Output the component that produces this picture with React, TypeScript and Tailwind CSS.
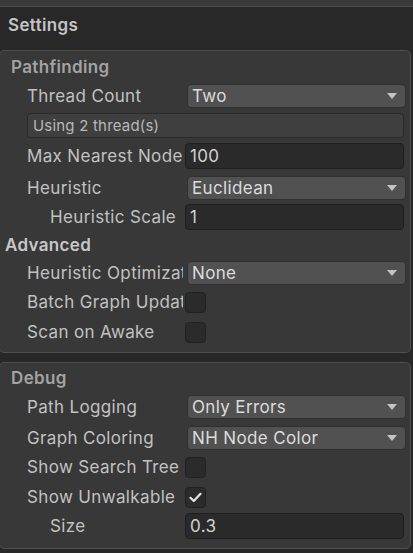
import React from "react";

function Arrow() {
    return (
        <svg width="10" height="7" viewBox="0 0 10 7" className="shrink-0">
            <path d="M0 0 L10 0 L5 6 Z" fill="#c4c4c4" />
        </svg>
    );
}

function Label({ text, indent = false }: { text: string; indent?: boolean }) {
    return (
        <div
            className={`${indent ? "pl-[50px]" : "pl-[27px]"} mr-[2px] w-[183px] shrink-0 overflow-hidden whitespace-nowrap text-[17px] tracking-[0.35px] text-[#c2c2c2]`}
        >
            {text}
        </div>
    );
}

function DropdownRow({ label, value }: { label: string; value: string }) {
    return (
        <div className="flex h-[24px] items-center">
            <Label text={label} />
            <div className="ml-[2px] mr-[4px] flex h-[24px] flex-1 items-center justify-between rounded-[4px] border border-[#303030] bg-[#515151] pl-[4px] pr-[8px] text-[17px] tracking-[0.35px] text-[#dcdcdc]">
                <span>{value}</span>
                <Arrow />
            </div>
        </div>
    );
}

function InputRow({ label, value, indent = false }: { label: string; value: string; indent?: boolean }) {
    return (
        <div className="flex h-[26px] items-center">
            <Label text={label} indent={indent} />
            <div className="mr-[6px] flex h-[26px] flex-1 items-center rounded-[4px] border border-[#1e1e1e] bg-[#2a2a2a] pl-[4px] text-[17px] tracking-[0.35px] text-[#d2d2d2]">
                {value}
            </div>
        </div>
    );
}

function CheckRow({ label, checked = false }: { label: string; checked?: boolean }) {
    return (
        <div className="flex h-[22px] items-center">
            <Label text={label} />
            <div className="flex h-[21px] w-[21px] items-center justify-center rounded-[4px] border border-[#212121] bg-[#2b2b2b]">
                {checked && (
                    <svg width="13" height="11" viewBox="0 0 13 11">
                        <path d="M1.5 5.8 L4.8 9 L11.5 1.8" stroke="#e4e4e4" strokeWidth="2.2" fill="none" strokeLinecap="round" strokeLinejoin="round" />
                    </svg>
                )}
            </div>
        </div>
    );
}

export default function App() {
    return (
        <div className="h-[553px] w-[413px] overflow-hidden bg-[#282828] font-['Inter',sans-serif] leading-[20px]">
            <div className="h-[7px] border-b border-[#4e4e4e] bg-[#3a3a3a]" />
            <div className="h-[43px] pl-[8px] pt-[8px] text-[17px] font-semibold tracking-[0.35px] text-[#c4c4c4]">Settings</div>

            {/* Pathfinding panel */}
            <div className="-ml-[1px] mr-[2px] rounded-[5px] border border-[#4f4f4f] bg-[#383838] pb-[9px]">
                <div className="h-[33px] pl-[11px] pt-[6px] text-[17px] font-semibold tracking-[0.35px] text-[#a3a3a3]">Pathfinding</div>
                <div className="flex flex-col">
                    <DropdownRow label="Thread Count" value="Two" />
                    <div className="ml-[27px] mr-[6px] mt-[5px] flex h-[25px] items-center rounded-[4px] border border-[#2a2a2a] bg-[#3f3f3f] pl-[5px] text-[15px] tracking-[0.2px] text-[#b8b8b8]">
                        Using 2 thread(s)
                    </div>
                    <div className="mt-[5px]">
                        <InputRow label="Max Nearest Node Distance" value="100" />
                    </div>
                    <div className="mt-[7px]">
                        <DropdownRow label="Heuristic" value="Euclidean" />
                    </div>
                    <div className="mt-[4px]">
                        <InputRow label="Heuristic Scale" value="1" indent />
                    </div>
                    <div className="h-[31px] pl-[5px] pt-[5px] text-[17px] font-semibold tracking-[0.35px] text-[#c8c8c8]">Advanced</div>
                    <DropdownRow label="Heuristic Optimization" value="None" />
                    <div className="mt-[6px]">
                        <CheckRow label="Batch Graph Updates" />
                    </div>
                    <div className="mt-[8px]">
                        <CheckRow label="Scan on Awake" />
                    </div>
                </div>
            </div>

            {/* Debug panel */}
            <div className="-ml-[1px] mr-[2px] mt-[9px] rounded-[5px] border border-[#4f4f4f] bg-[#383838] pb-[9px]">
                <div className="h-[32px] pl-[11px] pt-[5px] text-[17px] font-semibold tracking-[0.35px] text-[#a3a3a3]">Debug</div>
                <div className="flex flex-col">
                    <DropdownRow label="Path Logging" value="Only Errors" />
                    <div className="mt-[7px]">
                        <DropdownRow label="Graph Coloring" value="NH Node Color" />
                    </div>
                    <div className="mt-[6px]">
                        <CheckRow label="Show Search Tree" />
                    </div>
                    <div className="mt-[8px]">
                        <CheckRow label="Show Unwalkable" checked />
                    </div>
                    <div className="mt-[5px]">
                        <InputRow label="Size" value="0.3" indent />
                    </div>
                </div>
            </div>
        </div>
    );
}
